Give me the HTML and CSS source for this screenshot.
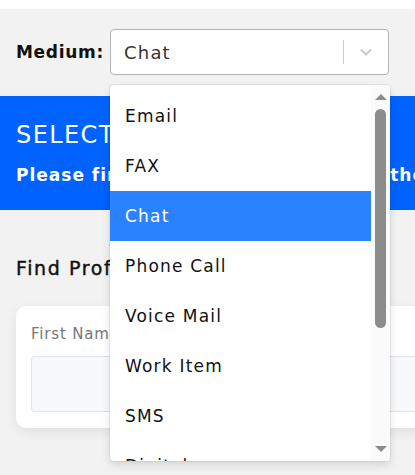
FILE: index.html
```html
<!DOCTYPE html>
<html>
<head>
<meta charset="utf-8">
<link rel="stylesheet" href="styles.css">
</head>
<body>
<div class="page">
  <div class="topbar"></div>
  <div class="medium-row">
    <span class="medium-label">Medium:</span>
    <div class="select">
      <span class="select-value">Chat</span>
      <span class="select-sep"></span>
      <svg class="chev" width="14" height="10" viewBox="0 0 14 10"><path d="M2 2.5 L7 7.5 L12 2.5" fill="none" stroke="#cccccc" stroke-width="2.2"/></svg>
    </div>
  </div>
  <div class="banner">
    <div class="banner-title">SELECT CUSTOMER PROFILE</div>
    <div class="banner-sub">Please find the customer profile in the list below</div>
  </div>
  <div class="find-title">Find Profile</div>
  <div class="card">
    <div class="field">
      <div class="field-label">First Name</div>
      <div class="field-input"></div>
    </div>
  </div>

  <div class="menu">
    <div class="menu-list">
      <div class="opt">Email</div>
      <div class="opt">FAX</div>
      <div class="opt selected">Chat</div>
      <div class="opt">Phone Call</div>
      <div class="opt">Voice Mail</div>
      <div class="opt">Work Item</div>
      <div class="opt">SMS</div>
      <div class="opt">Digital</div>
    </div>
    <div class="sb">
      <div class="sb-up"></div>
      <div class="sb-track"><div class="sb-thumb"></div></div>
      <div class="sb-down"></div>
    </div>
  </div>
</div>
</body>
</html>
```
FILE: styles.css
```css
* { box-sizing: border-box; }
html, body { margin: 0; padding: 0; }
body {
  background: #f2f2f2;
  font-family: "DejaVu Sans", "Open Sans", sans-serif;
  color: #111;
  width: 415px;
  height: 475px;
  overflow: hidden;
}
.page { position: relative; width: 415px; height: 475px; }
.topbar { height: 9px; background: #ffffff; }
.medium-row {
  display: flex;
  align-items: center;
  padding: 20px 0 0 16px;
  height: 66px;
}
.medium-label {
  font-weight: 700;
  font-size: 17px;
  letter-spacing: 0.7px;
  width: 94px;
  color: #111;
}
.select {
  display: flex;
  align-items: center;
  width: 279px;
  height: 46px;
  background: #fff;
  border: 1px solid #b3b3b3;
  border-radius: 4px;
  padding-left: 13px;
}
.select-value { flex: 1; font-size: 18px; letter-spacing: 1.2px; color: #333; }
.select-sep { width: 1px; height: 24px; background: #cccccc; }
.chev { margin: 0 15px 0 15px; }
.banner {
  margin-top: 21px;
  height: 114px;
  background: #0062ff;
  color: #fff;
  padding: 24px 0 0 16px;
  white-space: nowrap;
  overflow: hidden;
}
.banner-title { font-size: 24px; letter-spacing: 1.4px; line-height: 30px; }
.banner-sub { font-size: 17px; font-weight: 700; letter-spacing: 1px; line-height: 24px; margin-top: 13px; }
.find-title {
  margin: 46px 0 0 16px;
  font-size: 19px;
  letter-spacing: 1.6px;
  -webkit-text-stroke: 0.4px #111;
  line-height: 24px;
}
.card {
  margin: 26px 0 0 16px;
  width: 520px;
  height: 122px;
  background: #fff;
  border-radius: 10px;
  box-shadow: 0 4px 12px rgba(0,0,0,0.08);
  padding: 18px 15px;
}
.field-label { font-size: 15px; letter-spacing: 0.8px; color: #777; line-height: 20px; }
.field-input {
  margin-top: 12px;
  height: 56px;
  background: #f7f8fa;
  border: 1px solid #e2e4e8;
  border-radius: 4px;
}
.menu {
  position: absolute;
  left: 110px;
  top: 85px;
  width: 280px;
  height: 376px;
  background: #fff;
  border-radius: 4px;
  box-shadow: 0 0 0 1px rgba(0,0,0,0.06), 0 4px 10px rgba(0,0,0,0.12);
  display: flex;
  overflow: hidden;
}
.menu-list { flex: 1; padding-top: 6px; overflow: hidden; }
.opt {
  height: 50px;
  display: flex;
  align-items: center;
  padding-left: 15px;
  font-size: 17px;
  letter-spacing: 1.2px;
  color: #111;
}
.opt.selected { background: #2a82ff; color: #fff; }
.sb {
  width: 19px;
  background: #fafafa;
  display: flex;
  flex-direction: column;
  align-items: center;
}
.sb-up {
  margin-top: 9px;
  width: 0; height: 0;
  border-left: 6px solid transparent;
  border-right: 6px solid transparent;
  border-bottom: 6px solid #8c8c8c;
}
.sb-track { flex: 1; width: 100%; display: flex; justify-content: center; padding-top: 9px; }
.sb-thumb { width: 11px; height: 219px; background: #8c8c8c; border-radius: 6px; }
.sb-down {
  margin-bottom: 9px;
  width: 0; height: 0;
  border-left: 6px solid transparent;
  border-right: 6px solid transparent;
  border-top: 6px solid #8c8c8c;
}
```
